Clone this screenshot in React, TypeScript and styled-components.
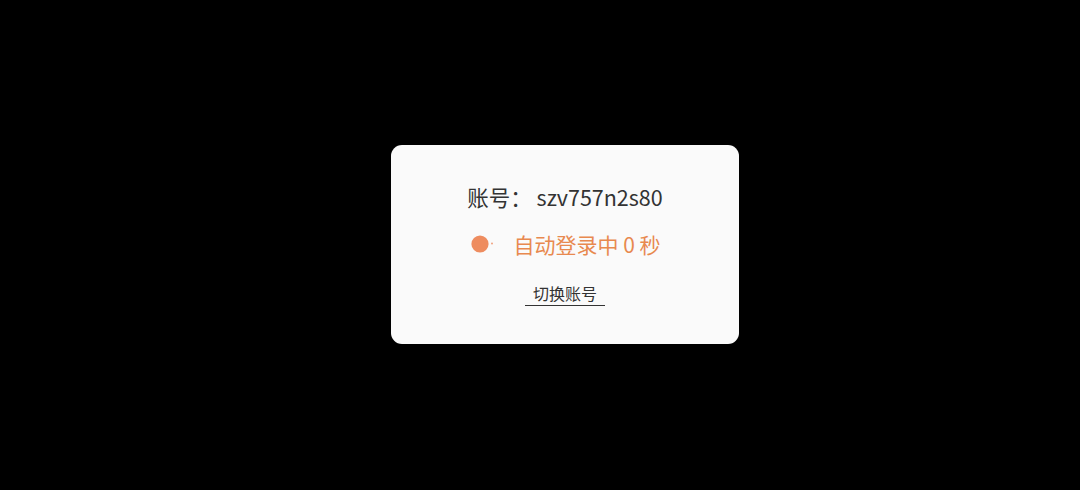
import React from 'react';
import styled, { createGlobalStyle } from 'styled-components';

const Global = createGlobalStyle`
  html, body { margin:0; padding:0; background:#000; }
  body { font-family:"Noto Sans CJK SC","Noto Sans",sans-serif; }
`;

const Screen = styled.div`
  width:1080px;height:490px;background:#000;
  display:flex;align-items:flex-start;justify-content:center;
`;
const Dialog = styled.div`
  margin-top:145px;margin-left:50px;
  width:348px;height:199px;box-sizing:border-box;
  background:#fafafa;border-radius:11px;
  display:flex;flex-direction:column;align-items:center;
  padding-top:36px;
`;
const Account = styled.div`
  font-size:21.5px;line-height:32px;color:#333;
`;
const Status = styled.div`
  display:flex;align-items:center;margin-top:15px;margin-left:2px;
  height:32px;
`;
const StatusText = styled.span`
  font-size:21px;line-height:32px;color:#e8894f;margin-left:18px;
`;
const Switch = styled.button`
  margin-top:22px;padding:0 8px 1px;border:none;background:none;
  border-bottom:1.5px solid #333;font-family:inherit;
  font-size:16px;line-height:22px;color:#333;cursor:pointer;
`;

function Spinner(){
  return (
    <svg width="24" height="20" viewBox="0 0 24 20">
      <circle cx="9" cy="10" r="8.6" fill="#ee8c5f"/>
      <circle cx="21" cy="9.5" r="1" fill="#ee8c5f" opacity="0.8"/>
    </svg>
  );
}

export default function App(){
  return (
    <Screen>
      <Global/>
      <Dialog>
        <Account>账号：&nbsp;szv757n2s80</Account>
        <Status>
          <Spinner/>
          <StatusText>自动登录中 0 秒</StatusText>
        </Status>
        <Switch>切换账号</Switch>
      </Dialog>
    </Screen>
  );
}
